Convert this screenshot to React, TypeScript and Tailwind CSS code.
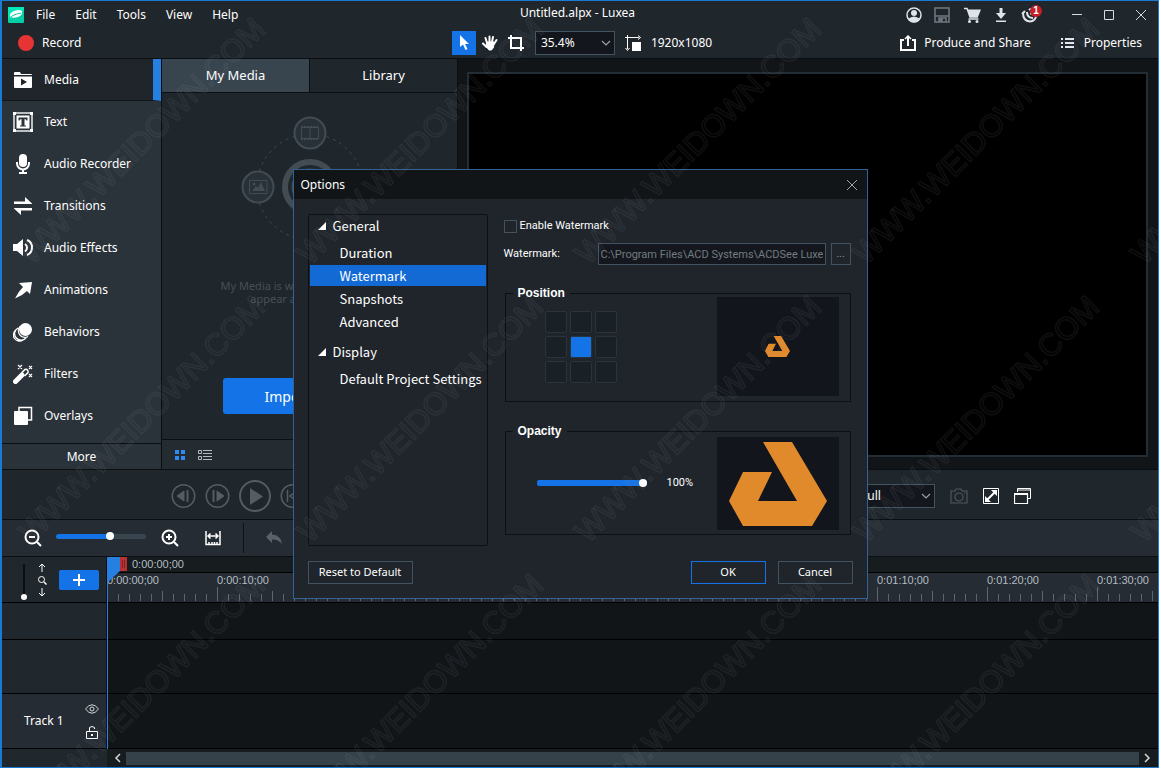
import React, { useState } from 'react';

interface MenuEntry {
  label: string;
  icon: React.ReactNode;
}

interface PositionGridProps {
  value: number;
  onChange: (cell: number) => void;
}

const sidebarItems: MenuEntry[] = [
  {
    label: 'Media',
    icon: (
      <svg width="20" height="20" viewBox="0 0 20 20" fill="#fff">
        <path d="M1 3q0-1 1-1h5l1 2h10q1 0 1 1H1z" />
        <path d="M1 6.500h18V17q0 1-1 1H2q-1 0-1-1zM8 8.500v7l6-3.500z" fillRule="evenodd" />
      </svg>
    ),
  },
  {
    label: 'Text',
    icon: (
      <svg width="20" height="20" viewBox="0 0 20 20">
        <rect x="1" y="1" width="18" height="18" fill="none" stroke="#b9bfc4" strokeWidth="2" />
        <path d="M0 0h3v3H0zM17 0h3v3h-3zM0 17h3v3H0zM17 17h3v3h-3zM3.500 3.500h13v13h-13z" fill="#fff" />
        <path d="M5.500 5.500h9v3h-1q0-1.500-2-1.500v6.500h1.500v1h-6v-1h1.500V7q-2 0-2 1.500h-1z" fill="#2b333a" />
      </svg>
    ),
  },
  {
    label: 'Audio Recorder',
    icon: (
      <svg width="20" height="20" viewBox="0 0 20 20">
        <rect x="6" y="0" width="8" height="13" rx="4" fill="#fff" />
        <path d="M4 8v1.500a6 6 0 0 0 12 0V8M10 15.500V19M6 19h8" fill="none" stroke="#fff" strokeWidth="2" />
      </svg>
    ),
  },
  {
    label: 'Transitions',
    icon: (
      <svg width="20" height="20" viewBox="0 0 20 20" fill="#fff">
        <path d="M1 5.500h11V1l7 6.500v.5H1zM19 14.500H8V19l-7-6.500V12h18z" />
      </svg>
    ),
  },
  {
    label: 'Audio Effects',
    icon: (
      <svg width="20" height="20" viewBox="0 0 20 20">
        <path d="M0 6h4l6-5v17l-6-5H0z" fill="#fff" />
        <path d="M12 6a4.500 4.500 0 0 1 0 7.500M14 2q5 2 5 7.500T14 17" fill="none" stroke="#fff" strokeWidth="2" />
      </svg>
    ),
  },
  {
    label: 'Animations',
    icon: (
      <svg width="20" height="20" viewBox="0 0 20 20" fill="#fff">
        <path d="M6 3l13-1-2 12-3-3Q9 16 2 18.500 5 12 10 7z" />
      </svg>
    ),
  },
  {
    label: 'Behaviors',
    icon: (
      <svg width="20" height="20" viewBox="0 0 20 20" fill="none" stroke="#fff">
        <path d="M5 6a6.500 6.500 0 1 0 8 10M3 8a5.500 5.500 0 1 0 7 10M7 4.500a6.500 6.500 0 0 0 8 10" strokeWidth="1.300" />
        <circle cx="12.500" cy="7.500" r="6.500" fill="#fff" stroke="none" />
      </svg>
    ),
  },
  {
    label: 'Filters',
    icon: (
      <svg width="20" height="20" viewBox="0 0 20 20">
        <path d="M2.500 17.500L9 11" stroke="#fff" strokeWidth="5" strokeLinecap="round" />
        <path d="M8.500 9L12 5.500q1.500-.5 2.500.5t.5 2.500L11.500 12" fill="none" stroke="#fff" strokeWidth="1.500" />
        <path d="M5 1l4 4M9 1L5 5M16 2l3 3M19 2l-3 3M16 10l3 3M19 10l-3 3" stroke="#fff" strokeWidth="1.200" />
      </svg>
    ),
  },
  {
    label: 'Overlays',
    icon: (
      <svg width="20" height="20" viewBox="0 0 20 20">
        <path d="M6 6V1.500h12.500V14H14" fill="none" stroke="#fff" strokeWidth="1.500" />
        <rect x="1" y="5" width="14" height="14" rx="1" fill="#fff" />
      </svg>
    ),
  },
];

const rulerLabels = [
  '0:00:00;00', '0:00:10;00', '0:00:20;00', '0:00:30;00', '0:00:40;00',
  '0:00:50;00', '0:01:00;00', '0:01:10;00', '0:01:20;00', '0:01:30;00',
];

const Chevron = () => (
  <svg width="10" height="6" viewBox="0 0 10 6" fill="none" stroke="#98a1a8" strokeWidth="1.200"
       className="absolute right-1 top-1/2 -translate-y-1/2 pointer-events-none">
    <path d="M1 1l4 4 4-4" />
  </svg>
);

const Logo = ({ size }: { size: string }) => (
  <svg viewBox="0 0 98 84" className={size} fill="#e08a2c">
    <path d="M34 0h29l35 59-15 25H14L0 59l14-29h29L29 59h39z" />
  </svg>
);

const TitleBar = () => (
  <header className="flex items-center h-[28px] pl-1.5 pr-[11px] text-[12px]">
    <div className="flex flex-1 items-center">
      <svg width="16" height="16" viewBox="0 0 16 16" className="mr-3">
        <rect width="16" height="16" rx="1" fill="#04cfa4" />
        <path d="M0 0h16v3L0 13z" fill="#03e6b8" />
        <path d="M2 10q-1-4 4-6 5-2 8 0 1 4-4 6-4 1.500-8 0z" fill="#fff" />
        <path d="M1 12q2-4 12-6" stroke="#04cfa4" fill="none" />
      </svg>
      <nav className="flex gap-5">
        <button>File</button>
        <button>Edit</button>
        <button>Tools</button>
        <button>View</button>
        <button>Help</button>
      </nav>
    </div>
    <h1 className="pb-1">Untitled.alpx - Luxea</h1>
    <div className="flex flex-1 items-center justify-end">
      <button aria-label="Account" className="mr-3">
        <svg width="16" height="16" viewBox="0 0 16 16">
          <circle cx="8" cy="8" r="7" fill="none" stroke="#dfe3ea" strokeWidth="1.500" />
          <circle cx="8" cy="6" r="3" fill="#dfe3ea" />
          <path d="M2 12q6-5 12 0-2 3.500-6 3.500T2 12z" fill="#dfe3ea" />
        </svg>
      </button>
      <button aria-label="Save" className="mr-3.5">
        <svg width="16" height="16" viewBox="0 0 16 16" fill="none" stroke="#707880" strokeWidth="1.500">
          <path d="M1 1h14v14H1zM1 9h14M5 15v-4h7v4" />
          <path d="M6 12h2v2H6z" fill="#707880" />
        </svg>
      </button>
      <button aria-label="Shop" className="mr-3">
        <svg width="17" height="16" viewBox="0 0 17 16">
          <path d="M0 1.500h3l3 8.500h8M4.500 12h10" fill="none" stroke="#dfe3ea" strokeWidth="1.500" />
          <path d="M3.500 2.500H17L14 10H6z" fill="#dfe3ea" />
          <circle cx="5.500" cy="14.500" r="1.500" fill="#dfe3ea" />
          <circle cx="13" cy="14.500" r="1.500" fill="#dfe3ea" />
        </svg>
      </button>
      <button aria-label="Download" className="mr-3">
        <svg width="16" height="16" viewBox="0 0 16 16" fill="#dfe3ea">
          <path d="M6.500 1h3v5H13l-5 6-5-6h3.500zM3 13.500h10V15H3z" />
        </svg>
      </button>
      <button aria-label="Notifications" className="relative mr-[30px]">
        <svg width="20" height="16" viewBox="0 0 20 16" fill="none" stroke="#dfe3ea" strokeWidth="2">
          <path d="M2 6q0 8 7 8.500 5-.5 6-5M1 7l3-3M6 5q0 6 6 6M8 3q1-1 3-1M9 6.500h3v2" />
        </svg>
        <span className="absolute -top-0.5 left-[9px] flex items-center justify-center size-3 rounded-full bg-[#c41f26] font-['Liberation_Sans'] text-[10px] leading-3 font-bold">1</span>
      </button>
      <button aria-label="Minimize" className="mr-5">
        <svg width="12" height="12" viewBox="0 0 12 12" stroke="#d8dce0"><path d="M1 5.500h10" /></svg>
      </button>
      <button aria-label="Maximize" className="mr-5">
        <svg width="12" height="12" viewBox="0 0 12 12" stroke="#d8dce0" fill="none"><path d="M1.500 1.500h9v9h-9z" /></svg>
      </button>
      <button aria-label="Close">
        <svg width="12" height="12" viewBox="0 0 12 12" stroke="#d8dce0"><path d="M1 1l10 10M11 1L1 11" /></svg>
      </button>
    </div>
  </header>
);

const Toolbar = () => (
  <div className="flex items-center h-[30px] pb-px pl-4 pr-4 text-[12px] border-b border-[#0c0f11]">
    <div className="flex-1">
      <button className="flex items-center gap-2">
        <span className="size-4 rounded-full bg-[#e63434]" />
        Record
      </button>
    </div>
    <div className="flex items-center ml-1">
      <button aria-label="Select" className="flex items-center justify-center size-6 bg-[#1473e6]">
        <svg width="12" height="16" viewBox="0 0 12 16" fill="#fff">
          <path d="M2 0v12l3-2.500 2.500 5.500 2-1L7 9h4z" />
        </svg>
      </button>
      <button aria-label="Pan" className="ml-1.5">
        <svg width="16" height="16" viewBox="0 0 16 16" fill="none" stroke="#fff" strokeWidth="2" strokeLinecap="round">
          <path d="M5 8L3.500 3M7.500 7V1.500M10 7l1-5M12 9l2.500-4M4.500 12L1 8.500" />
          <path d="M5 7h7l-.5 5.500L9.500 15H7l-2.500-3z" fill="#fff" strokeWidth="1" />
        </svg>
      </button>
      <button aria-label="Crop" className="ml-2.5">
        <svg width="16" height="16" viewBox="0 0 16 16" fill="none" stroke="#fff" strokeWidth="2">
          <path d="M3 0v13h13M0 3h13v13" />
        </svg>
      </button>
      <div className="relative ml-[11px]">
        <select aria-label="Zoom" className="block appearance-none w-20 h-6 pl-[5px] bg-[#13171d] border border-[#42535f] text-[12px]">
          <option>35.4%</option>
        </select>
        <Chevron />
      </div>
      <svg width="16" height="16" viewBox="0 0 16 16" className="ml-2.5">
        <path d="M2.500 0v14M0 2.500h14M.5 13l2 2.500 2-2.500M13 .5l2.500 2-2.500 2" stroke="#fff" fill="none" />
        <rect x="7" y="7" width="9" height="9" fill="#fff" />
      </svg>
      <span className="ml-2.5">1920x1080</span>
    </div>
    <div className="flex flex-1 items-center justify-end gap-[30px]">
      <button className="flex items-center gap-2">
        <svg width="16" height="16" viewBox="0 0 16 16" fill="none" stroke="#fff" strokeWidth="2">
          <path d="M4 5H1v10h14V5h-3M8 11V2" />
          <path d="M5 4l3-3 3 3" strokeWidth="1.500" />
        </svg>
        Produce and Share
      </button>
      <button className="flex items-center gap-2.5">
        <svg width="13" height="12" viewBox="0 0 13 12" fill="#e6e9f2">
          <path d="M0 1h2v2H0zM0 5h2v2H0zM0 9h2v2H0zM4 1h9v2H4zM4 5h9v2H4zM4 9h9v2H4z" />
        </svg>
        Properties
      </button>
    </div>
  </div>
);

const Sidebar = () => (
  <aside className="flex flex-col w-40 shrink-0 border-r border-[#0c0f11] bg-[#2b333a] text-[12px]">
    {sidebarItems.map((item) => (
      <button
        key={item.label}
        className={`flex items-center gap-[11px] h-[42px] pl-[11px] text-left ${
          item.label === 'Media' ? 'bg-[#1f252b] border-b border-b-[#14181b] border-r-8 border-r-[#2680e2]' : ''
        }`}
      >
        {item.icon}
        {item.label}
      </button>
    ))}
    <button className="h-[26px] mt-auto border-t border-[#0c0f11]">More</button>
  </aside>
);

const MediaPanel = () => (
  <section className="flex flex-col w-[296px] shrink-0 bg-[#1f262c] border-r border-[#0c0f11]">
    <div className="flex h-[34px] border-b border-[#0c0f11] text-[13px]">
      <button className="flex-1 bg-[#38454f] border-r border-[#0c0f11]">My Media</button>
      <button className="flex-1">Library</button>
    </div>
    <div className="flex flex-1 flex-col items-center pt-[22px]">
      <svg width="140" height="164" viewBox="0 0 140 164" fill="none" stroke="#434c53">
        <circle cx="70" cy="72" r="53" strokeDasharray="3 4" />
        <circle cx="70" cy="72" r="25" strokeWidth="6" />
        <circle cx="70" cy="72" r="16" strokeWidth="5" />
        <g fill="#273137" strokeWidth="2">
          <circle cx="70" cy="18" r="15.500" />
          <circle cx="18" cy="72" r="15.500" />
          <circle cx="122" cy="72" r="15.500" />
        </g>
        <path d="M61.500 12.500h17v11h-17zM70 12v12" />
        <path d="M61 12h18M61 24h18" strokeWidth="2" strokeDasharray="2 1" />
        <path d="M9.500 65.500h17.500v13H9.500z" />
        <path d="M12 76l4-5 2 2 3-6 4 9z" fill="#434c53" stroke="none" />
        <circle cx="14" cy="69" r="1.500" fill="#434c53" stroke="none" />
      </svg>
      <p className="text-center text-[11px] leading-[13px] text-[#485056]">
        My Media is where your media will<br />appear after importing
      </p>
      <button className="w-[173px] h-9 mt-[73px] rounded-[3px] bg-[#1473e6] text-[14px]">Import Media</button>
    </div>
    <div className="flex items-center gap-3 h-[30px] pl-3 bg-[#242b31] border-t border-[#0c0f11]">
      <button aria-label="Grid view">
        <svg width="12" height="12" viewBox="0 0 12 12" fill="#2d8cf0">
          <path d="M1 1h4v4H1zM7 1h4v4H7zM1 7h4v4H1zM7 7h4v4H7z" />
        </svg>
      </button>
      <button aria-label="List view">
        <svg width="14" height="12" viewBox="0 0 14 12" fill="none" stroke="#b5bbc0">
          <path d="M.5 1.500h3v3h-3zM.5 7.500h3v3h-3zM5 1.500h9M5 4.500h9M5 7.500h9M5 10.500h9" />
        </svg>
      </button>
    </div>
  </section>
);

const PlaybackBar = () => (
  <div className="flex items-center h-[50px] pt-0.5 pl-[169px] pr-[127px] border-b border-[#0c0f11] text-[12px]">
    <div className="flex flex-1 items-center gap-[9px] text-[#565c61]">
      <button aria-label="Previous frame">
        <svg width="25" height="26" viewBox="0 0 25 26" fill="none" stroke="currentColor" strokeWidth="1.500">
          <circle cx="12.500" cy="13" r="11.250" />
          <path d="M13 8v10l-7-5z" fill="currentColor" strokeWidth="1" />
          <path d="M16.500 7v12" strokeWidth="2" />
        </svg>
      </button>
      <button aria-label="Next frame">
        <svg width="25" height="26" viewBox="0 0 25 26" fill="none" stroke="currentColor" strokeWidth="1.500">
          <circle cx="12.500" cy="13" r="11.250" />
          <path d="M12 8v10l7-5z" fill="currentColor" strokeWidth="1" />
          <path d="M8.500 7v12" strokeWidth="2" />
        </svg>
      </button>
      <button aria-label="Play">
        <svg width="32" height="32" viewBox="0 0 32 32" fill="none" stroke="currentColor" strokeWidth="2">
          <circle cx="16" cy="16" r="15" />
          <path d="M11 8v17l13-8.500z" fill="currentColor" strokeWidth="0" />
        </svg>
      </button>
      <button aria-label="Go to start">
        <svg width="25" height="26" viewBox="0 0 25 26" fill="none" stroke="currentColor" strokeWidth="1.500">
          <circle cx="12.500" cy="13" r="11.250" />
          <path d="M7.500 7v12M17 8v10l-7-5z" />
        </svg>
      </button>
    </div>
    <div className="flex items-center gap-[15px]">
      <div className="relative">
        <select aria-label="Preview quality" className="block appearance-none w-20 h-6 pl-[5px] bg-[#13171d] border border-[#42535f]">
          <option>Full</option>
        </select>
        <Chevron />
      </div>
      <button aria-label="Snapshot">
        <svg width="18" height="16" viewBox="0 0 18 16" fill="none" stroke="#50575c" strokeWidth="1.200">
          <path d="M1 3h4l1-2h5l1 2h5v12H1z" />
          <circle cx="9" cy="9" r="4" />
          <path d="M14 5h1.500" />
        </svg>
      </button>
      <button aria-label="Full screen">
        <svg width="16" height="16" viewBox="0 0 16 16" fill="none" stroke="#fff">
          <path d="M.5.500h15v15H.5z" />
          <path d="M4 12l8-8" strokeWidth="2" />
          <path d="M8 2h6v6zM2 8v6h6z" fill="#fff" stroke="none" />
        </svg>
      </button>
      <button aria-label="Detach preview">
        <svg width="17" height="16" viewBox="0 0 17 16" fill="none" stroke="#fff">
          <path d="M3.500 4V.5h13v10H14M3 2h13" />
          <path d="M.5 5.500h13v10H.5zM0 6.500h13" strokeWidth="1.200" />
        </svg>
      </button>
    </div>
  </div>
);

const TimelineTools = () => {
  const [zoom, setZoom] = useState(61);

  return (
    <div className="flex items-center h-[37px] pl-[22px] bg-[#252c33] border-b border-[#0c0f11]">
      <button aria-label="Zoom out">
        <svg width="18" height="18" viewBox="0 0 18 18" fill="none" stroke="#fff" strokeWidth="2">
          <circle cx="8" cy="8" r="6.500" />
          <path d="M5 8h6M13 13l4 4" />
        </svg>
      </button>
      <input
        type="range"
        aria-label="Timeline zoom"
        value={zoom}
        onChange={(e) => setZoom(Number(e.target.value))}
        style={{ background: `linear-gradient(to right, #1473e6 ${zoom}%, #38454f ${zoom}%)` }}
        className="appearance-none w-[90px] h-[5px] mb-1 ml-3.5 rounded-full [&::-webkit-slider-thumb]:appearance-none [&::-webkit-slider-thumb]:size-2 [&::-webkit-slider-thumb]:rounded-full [&::-webkit-slider-thumb]:bg-white"
      />
      <button aria-label="Zoom in" className="ml-[15px]">
        <svg width="18" height="18" viewBox="0 0 18 18" fill="none" stroke="#fff" strokeWidth="2">
          <circle cx="8" cy="8" r="6.500" />
          <path d="M5 8h6M8 5v6M13 13l4 4" />
        </svg>
      </button>
      <button aria-label="Fit timeline" className="ml-[26px]">
        <svg width="16" height="16" viewBox="0 0 16 16" fill="none" stroke="#fff">
          <path d="M1 1v13.500h14V1M4 12v2M7 12v2M9.500 12v2M12 12v2" strokeWidth="1.500" />
          <path d="M3 6h10M5.500 3.500L3 6l2.500 2.500M10.500 3.500L13 6l-2.500 2.500" strokeWidth="1.500" />
        </svg>
      </button>
      <span className="w-px h-[30px] ml-[22px] bg-[#0f1214]" />
      <button aria-label="Undo" className="ml-[22px]">
        <svg width="16" height="14" viewBox="0 0 16 14" fill="#5a6268">
          <path d="M6 0v3.500Q15 4 16 13q-4-5-10-4.500V12L0 6z" />
        </svg>
      </button>
    </div>
  );
};

const TimelineHead = () => (
  <div className="flex items-center w-[105px] shrink-0 pl-[18px] border-r border-[#0c0f11] bg-[#20272d]">
    <input
      type="range"
      aria-label="Track height"
      defaultValue={0}
      className="appearance-none [writing-mode:vertical-lr] [direction:rtl] w-2 h-9 mt-1 bg-[linear-gradient(#0c0f11,#0c0f11)] bg-[length:2px_100%] bg-center bg-no-repeat [&::-webkit-slider-thumb]:appearance-none [&::-webkit-slider-thumb]:size-1.5 [&::-webkit-slider-thumb]:rounded-full [&::-webkit-slider-thumb]:bg-white"
    />
    <svg width="10" height="34" viewBox="0 0 10 34" fill="none" stroke="#fff" className="ml-[9px]">
      <path d="M5 9V1M2 4l3-3 3 3M5 25v8M2 30l3 3 3-3" />
      <circle cx="4.500" cy="16.500" r="3" />
      <path d="M7 19l2.500 2.500" strokeWidth="1.500" />
    </svg>
    <button aria-label="Add track" className="flex items-center justify-center w-10 h-5 ml-3 rounded-[2px] bg-[#1473e6]">
      <svg width="12" height="12" viewBox="0 0 12 12" stroke="#fff" strokeWidth="2"><path d="M6 0v12M0 6h12" /></svg>
    </button>
  </div>
);

const Timeline = () => (
  <section className="flex flex-1 flex-col">
    <div className="flex h-[46px] border-b border-black font-['Liberation_Sans'] text-[11px] leading-[15px] text-[#b4bcc3]">
      <TimelineHead />
      <div className="relative flex-1 min-w-0">
        <div className="h-4 pl-[25px] bg-[#171c1f] border-b border-black">0:00:00;00</div>
        <div className="flex h-[29px] overflow-hidden bg-[#252c33]">
          {rulerLabels.map((label) => (
            <div key={label} className="flex flex-col justify-between w-[110px] shrink-0">
              <span>{label}</span>
              <div className="flex items-end h-[14px] pb-px">
                {[14, 7, 7, 7, 7, 10, 7, 7, 7, 7].map((height, i) => (
                  <i key={i} style={{ height }} className="w-[11px] border-l border-[#5b6870]" />
                ))}
              </div>
            </div>
          ))}
        </div>
        {/* Playhead */}
        <svg width="21" height="192" viewBox="0 0 21 192" className="absolute top-0 left-0">
          <path d="M13 0h7v14h-7z" fill="#b83232" />
          <path d="M15.500 3v8M17.500 3v8" stroke="#8a1f22" />
          <path d="M0 0h13v14L1 25v167H0z" fill="#2680e2" />
        </svg>
      </div>
    </div>
    <div className="flex h-[37px] border-b border-black">
      <div className="w-[105px] border-r border-[#0c0f11] bg-[#20272d]" />
      <div className="flex-1 bg-[#111518]" />
    </div>
    <div className="flex h-[54px] border-b border-black">
      <div className="w-[105px] border-r border-[#0c0f11] bg-[#20272d]" />
      <div className="flex-1 bg-[#111518]" />
    </div>
    <div className="flex h-[55px] border-b border-black">
      <div className="flex items-center justify-between w-[105px] pl-[22px] pr-[7px] border-r border-[#0c0f11] bg-[#252c33] text-[12px]">
        Track 1
        <div className="flex flex-col items-center gap-3">
          <button aria-label="Hide track">
            <svg width="14" height="10" viewBox="0 0 14 10" fill="none" stroke="#d5d9dc">
              <path d="M.5 5q6.500-8.500 13 0-6.500 8.500-13 0z" />
              <circle cx="7" cy="5" r="2" />
            </svg>
          </button>
          <button aria-label="Lock track">
            <svg width="12" height="13" viewBox="0 0 12 13" fill="none" stroke="#fff">
              <path d="M.5 5.500h11v7H.5zM3.500 5V1.500q2.500-2 5 0V3" />
              <path d="M5 9h2" strokeWidth="2" />
            </svg>
          </button>
        </div>
      </div>
      <div className="flex-1 bg-[#111518]" />
    </div>
    <div className="flex flex-1">
      <div className="w-[105px] bg-[#20272d]" />
      <div className="flex flex-1 items-center gap-[5px] px-[7px] bg-[#171c1f]">
        <svg width="7" height="10" viewBox="0 0 7 10" fill="none" stroke="#d5d9dc" strokeWidth="1.500"><path d="M6 1L2 5l4 4" /></svg>
        <div className="flex-1 h-[13px] bg-[#36424a]" />
        <svg width="7" height="10" viewBox="0 0 7 10" fill="none" stroke="#d5d9dc" strokeWidth="1.500"><path d="M1 1l4 4-4 4" /></svg>
      </div>
    </div>
  </section>
);

const PositionGrid: React.FC<PositionGridProps> = ({ value, onChange }) => (
  <div className="grid grid-cols-3 gap-[3px]">
    {Array.from({ length: 9 }, (_, cell) => (
      <button
        key={cell}
        aria-label={`Position ${cell + 1}`}
        onClick={() => onChange(cell)}
        className={`size-[22px] rounded-[2px] border border-[#2b3439] ${cell === value ? 'bg-[#1473e6]' : 'bg-[#192026]'}`}
      />
    ))}
  </div>
);

const TreeHeading = ({ label }: { label: string }) => (
  <button className="flex items-center gap-[7px] h-5 pl-2">
    <svg width="8" height="8" viewBox="0 0 8 8" fill="#fff"><path d="M8 0v8H0z" /></svg>
    {label}
  </button>
);

const OptionsDialog = () => {
  const [section, setSection] = useState('Watermark');
  const [position, setPosition] = useState(4);
  const [opacity, setOpacity] = useState(100);

  return (
    <div className="absolute inset-0 z-10 flex items-center justify-center">
      <div role="dialog" aria-label="Options" className="w-[575px] bg-[#1f252b] border border-[#336396] font-['Roboto',sans-serif] text-[11px]">
        <div className="flex items-center justify-between h-[29px] pl-[7px] pr-2.5 bg-[#111518] font-['Noto_Sans'] text-[12px]">
          <h2>Options</h2>
          <button aria-label="Close options">
            <svg width="10" height="10" viewBox="0 0 10 10" stroke="#a0a5a9"><path d="M0 0l10 10M10 0L0 10" /></svg>
          </button>
        </div>

        <div className="flex gap-4 pt-[15px] pl-3.5 pr-4">
          <nav className="flex flex-col w-[180px] h-[332px] p-px border border-[#0c0f16] rounded-[2px] font-['Noto_Sans_CJK_SC',sans-serif] text-[13px] leading-5">
            <TreeHeading label="General" />
            <div className="flex flex-col gap-0.5 mt-1.5 mb-2.5">
              {['Duration', 'Watermark', 'Snapshots', 'Advanced'].map((name) => (
                <button
                  key={name}
                  onClick={() => setSection(name)}
                  className={`h-[21px] pl-[30px] text-left ${name === section ? 'bg-[#136ad5]' : ''}`}
                >
                  {name}
                </button>
              ))}
            </div>
            <TreeHeading label="Display" />
            <button className="h-[21px] pl-[30px] mt-1.5 text-left whitespace-nowrap">Default Project Settings</button>
          </nav>

          <div className="flex-1">
            <label className="flex items-center gap-[3px] mt-1.5 h-[13px]">
              <input type="checkbox" className="appearance-none size-[13px] border border-[#42535f]" />
              Enable Watermark
            </label>
            <div className="flex items-center mt-2.5">
              <label htmlFor="watermark-path" className="w-[94px]">Watermark:</label>
              <input
                id="watermark-path"
                disabled
                defaultValue="C:\Program Files\ACD Systems\ACDSee Luxea"
                className="flex-1 min-w-0 h-[22px] px-0.5 bg-[#14181e] border border-[#42535f] text-[#737a80]"
              />
              <button aria-label="Browse" className="w-5 h-[22px] ml-[5px] border border-[#42535f] text-[#8c9398]">...</button>
            </div>

            <fieldset className="h-[117px] mt-5 ml-px border border-[#0c0f16] flex items-start justify-between pl-[39px] pr-[11px]">
              <legend className="-ml-8 px-[5px] font-['Liberation_Sans'] text-[12px] leading-4 font-bold">Position</legend>
              <div className="pt-[10px]">
                <PositionGrid value={position} onChange={setPosition} />
              </div>
              <div className="flex items-center justify-center w-[122px] h-[99px] -mt-1 bg-[#12161c]">
                <Logo size="w-[25px]" />
              </div>
            </fieldset>

            <fieldset className="h-[112px] mt-[21px] ml-px border border-[#0c0f16] flex items-start justify-between pl-[31px] pr-[11px]">
              <legend className="-ml-6 px-[5px] font-['Liberation_Sans'] text-[12px] leading-4 font-bold">Opacity</legend>
              <div className="flex items-center h-[88px] gap-5">
                <input
                  type="range"
                  aria-label="Opacity"
                  value={opacity}
                  onChange={(e) => setOpacity(Number(e.target.value))}
                  style={{ background: `linear-gradient(to right, #1473e6 ${opacity}%, #38454f ${opacity}%)` }}
                  className="appearance-none w-[110px] h-1.5 rounded-[2px] [&::-webkit-slider-thumb]:appearance-none [&::-webkit-slider-thumb]:size-2 [&::-webkit-slider-thumb]:rounded-full [&::-webkit-slider-thumb]:bg-white"
                />
                <span>{opacity}%</span>
              </div>
              <div className="flex items-center justify-center w-[122px] h-[93px] -mt-0.5 bg-[#12161c]">
                <Logo size="w-[98px]" />
              </div>
            </fieldset>
          </div>
        </div>

        <div className="flex items-center gap-3 pt-[15px] pb-3.5 pl-3.5 pr-3.5 font-['Noto_Sans']">
          <button className="w-[105px] h-[23px] mr-auto border border-[#42535f]">Reset to Default</button>
          <button className="w-[75px] h-[23px] border border-[#1473e6]">OK</button>
          <button className="w-[75px] h-[23px] border border-[#42535f]">Cancel</button>
        </div>
      </div>
    </div>
  );
};

const WatermarkOverlay = () => (
  <svg className="absolute inset-0 z-20 size-full pointer-events-none">
    <defs>
      <pattern id="site-mark" width="278" height="278" patternUnits="userSpaceOnUse">
        <text x="139" y="151" transform="rotate(-45 139 139)" textAnchor="middle" fontSize="31"
              fontFamily="Liberation Sans" fill="none" stroke="#98a0a8" strokeOpacity="0.09" strokeWidth="1.500">
          WWW.WEIDOWN.COM
        </text>
      </pattern>
    </defs>
    <rect width="100%" height="100%" fill="url(#site-mark)" />
  </svg>
);

export default function App() {
  return (
    <div className="relative flex flex-col min-h-screen mr-0.5 bg-[#1f262c] border border-[#1a7ad4] border-l-2 font-['Noto_Sans',sans-serif] text-white">
      <TitleBar />
      <Toolbar />
      <main className="flex h-[411px] border-b border-[#0c0f11]">
        <Sidebar />
        <MediaPanel />
        <div className="flex flex-1 pt-[13px] pb-3 pl-[9px] pr-2.5 bg-[#111518]">
          <div className="flex-1 bg-black border-2 border-[#232d35]" />
        </div>
      </main>
      <PlaybackBar />
      <TimelineTools />
      <Timeline />
      <OptionsDialog />
      <WatermarkOverlay />
    </div>
  );
}
